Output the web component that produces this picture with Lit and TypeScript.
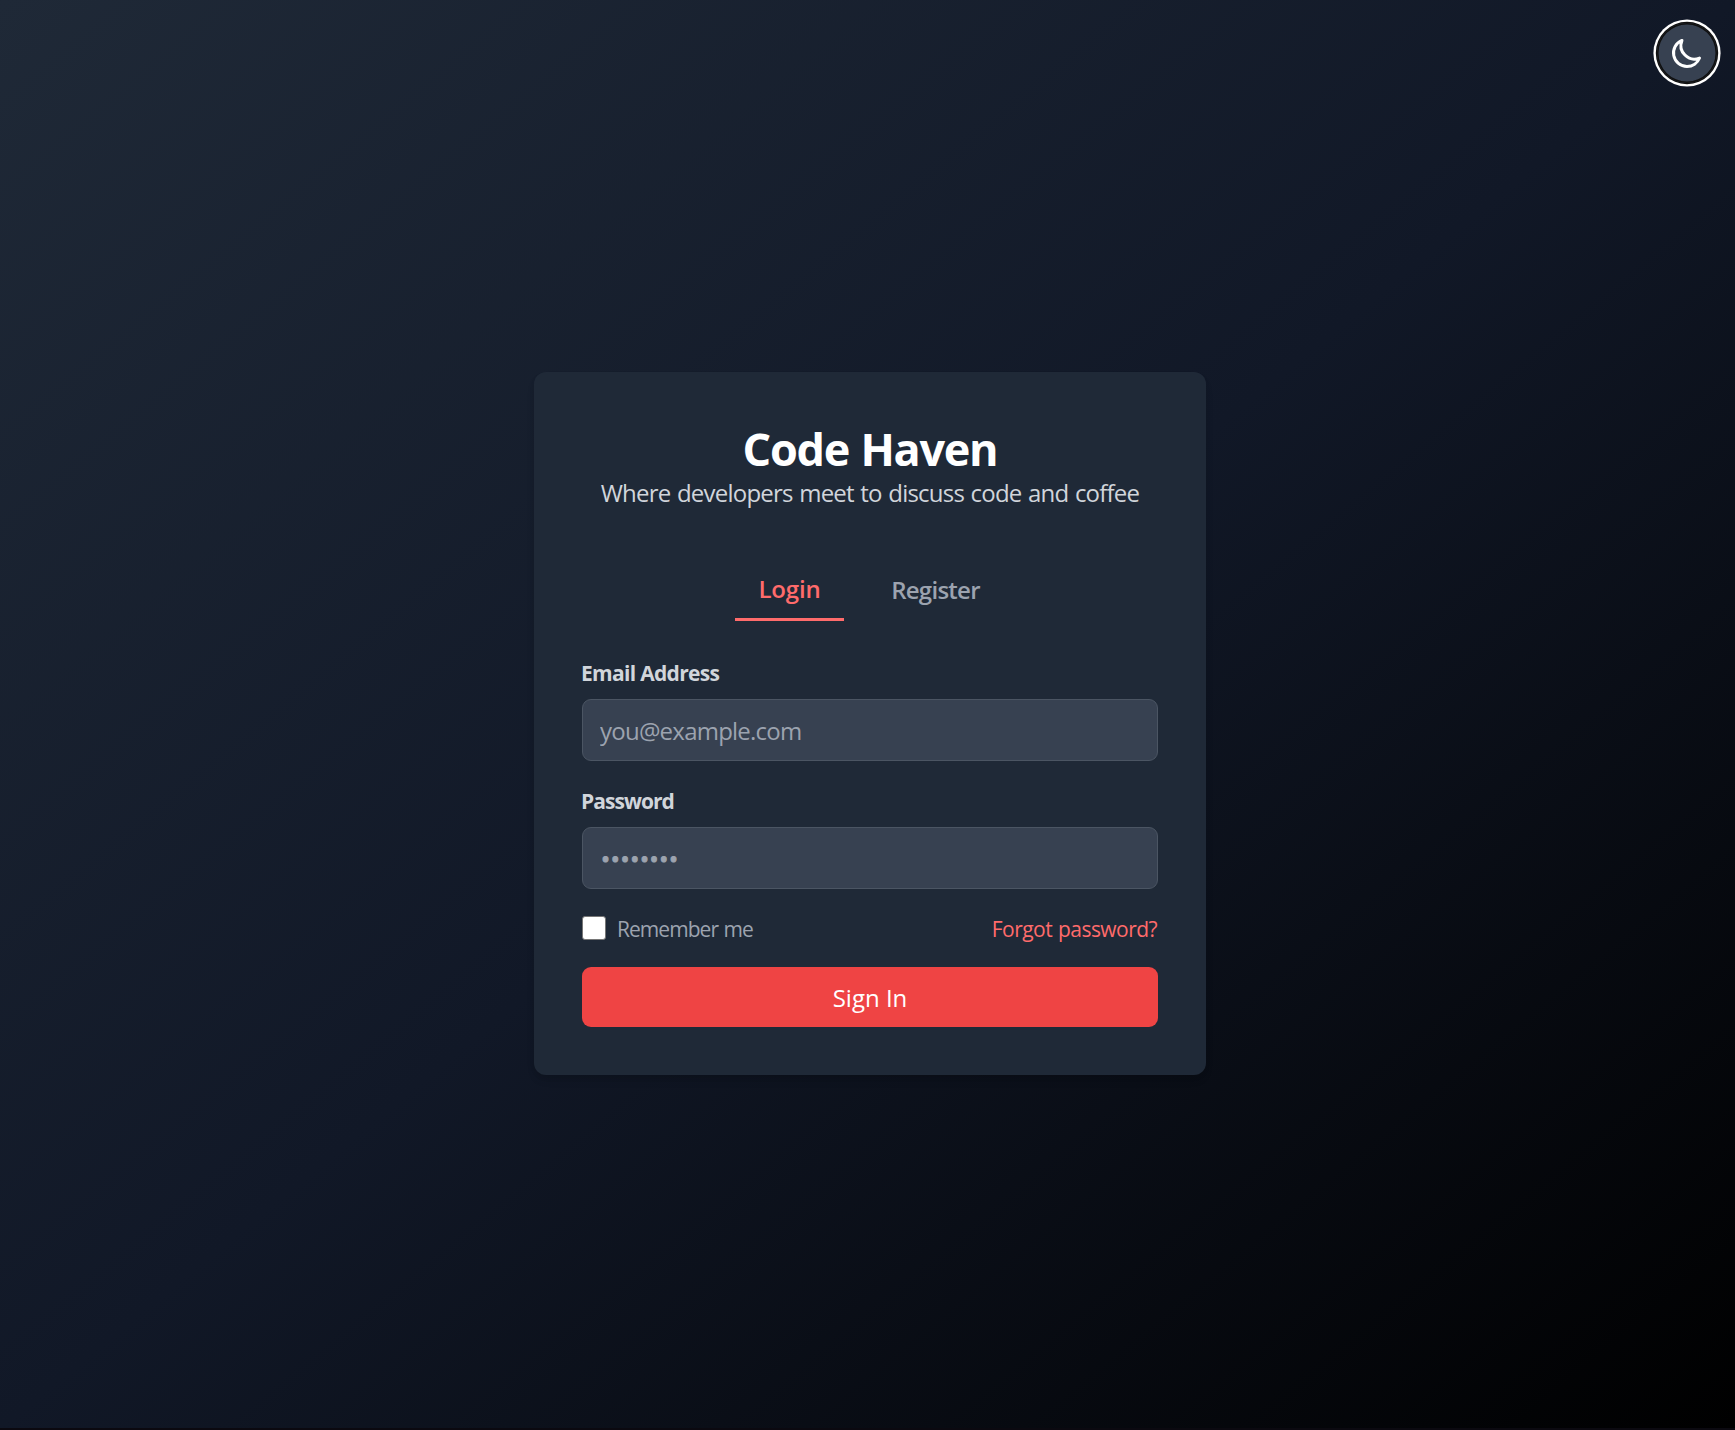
import { LitElement, html, css } from "lit";
import { customElement, state } from "lit/decorators.js";
import { classMap } from "lit/directives/class-map.js";

@customElement("theme-toggle")
class ThemeToggle extends LitElement {
  static styles = css`
    :host {
      display: block;
    }
    .toggle {
      box-sizing: border-box;
      display: flex;
      align-items: center;
      justify-content: center;
      width: 60px;
      height: 60px;
      padding: 0;
      border: 0;
      border-radius: 50%;
      background: #374151;
      color: #fff;
      outline: none;
      box-shadow: 0 0 0 1.2px #101010, 0 0 0 3.6px #fff, inset 0 0 0 1.5px #101010;
      cursor: pointer;
    }
    .icon {
      display: block;
      width: 36px;
      height: 36px;
    }
  `;

  render() {
    return html`
      <button class="toggle" type="button">
        <svg class="icon" viewBox="0 0 24 24" fill="none" stroke="currentColor" stroke-width="2" stroke-linecap="round" stroke-linejoin="round">
          <path d="M20.354 15.354A9 9 0 018.646 3.646 9.003 9.003 0 0012 21a9.003 9.003 0 008.354-5.646z"></path>
        </svg>
      </button>
    `;
  }
}

@customElement("app-root")
class AppRoot extends LitElement {
  @state() private tab = "login";

  static styles = css`
    :host {
      display: block;
      font-family: "Open Sans", "Noto Sans", sans-serif;
      font-size: 24px;
      line-height: 36px;
      color: #fff;
    }
    .page {
      position: relative;
      box-sizing: border-box;
      display: flex;
      align-items: flex-start;
      justify-content: center;
      height: 1430px;
      padding: 372px 0 0 5px;
      border-bottom: 2px solid #0b0910;
      background: linear-gradient(to bottom right, #1f2937, #111827, #000);
      background-clip: padding-box;
      overflow: hidden;
    }
    .theme {
      position: absolute;
      top: 23px;
      right: 18px;
    }
    .card {
      box-sizing: border-box;
      width: 672px;
      height: 703px;
      padding: 48px;
      border-radius: 12px;
      background: #1f2937;
      box-shadow: 0 6px 9px -1px rgba(0, 0, 0, 0.1), 0 3px 6px -2px rgba(0, 0, 0, 0.1);
    }
    .title {
      margin: 0;
      padding-top: 1px;
      font-size: 45px;
      font-weight: 700;
      line-height: 56px;
      letter-spacing: -1.29px;
      word-spacing: 1px;
      text-align: center;
    }
    .subtitle {
      margin: -1px 0 0;
      line-height: 34px;
      letter-spacing: -0.773px;
      word-spacing: 1px;
      text-align: center;
      white-space: nowrap;
      color: #d1d5db;
    }
    .tabs {
      display: flex;
      justify-content: center;
      gap: 24px;
      height: 63px;
      margin-top: 48px;
    }
    .tab {
      box-sizing: border-box;
      display: flex;
      align-items: center;
      justify-content: center;
      padding: 0;
      border: 0;
      background: none;
      font: inherit;
      font-weight: 600;
      color: #9ca3af;
      cursor: pointer;
    }
    .tab-login {
      width: 109px;
      padding-top: 1px;
      letter-spacing: -0.171px;
    }
    .tab-register {
      width: 137px;
      padding-right: 2px;
      letter-spacing: -0.736px;
    }
    .active {
      border-bottom: 3px solid #ff6b6b;
      color: #ff6b6b;
    }
    .form {
      display: flex;
      flex-direction: column;
      margin-top: 37px;
    }
    .field {
      display: flex;
      flex-direction: column;
      gap: 11px;
      margin-bottom: 25px;
    }
    .label {
      margin-left: -1px;
      font-size: 21px;
      font-weight: 700;
      line-height: 30px;
      color: #d1d5db;
    }
    .label-email {
      letter-spacing: -0.691px;
    }
    .label-password {
      letter-spacing: -0.966px;
    }
    .input {
      box-sizing: border-box;
      width: 100%;
      height: 62px;
      padding: 12px 17px;
      border: 1px solid #4b5563;
      border-radius: 9px;
      background: #374151;
      font: inherit;
      color: #fff;
      outline: none;
    }
    .input::placeholder {
      color: #9ca3af;
      opacity: 1;
    }
    .input-email {
      letter-spacing: -0.768px;
    }
    .input-password {
      padding-left: 18px;
      letter-spacing: 0.7px;
      -webkit-text-stroke: 1px #9ca3af;
    }
    .options {
      display: flex;
      align-items: flex-start;
      justify-content: space-between;
      height: 30px;
      margin-bottom: 23px;
      font-size: 21px;
      line-height: 30px;
    }
    .remember {
      display: flex;
      align-items: flex-start;
      gap: 11px;
      letter-spacing: -0.955px;
      word-spacing: 1px;
      color: #9ca3af;
    }
    .check {
      appearance: none;
      box-sizing: border-box;
      width: 24px;
      height: 24px;
      margin: 2px 0 0;
      border: 1px solid #767676;
      border-radius: 3px;
      background: #fff;
    }
    .forgot {
      margin-right: 1px;
      letter-spacing: -0.55px;
      word-spacing: 1px;
      color: #ff6b6b;
      text-decoration: none;
    }
    .submit {
      height: 60px;
      padding: 1px 0 0;
      border: 0;
      border-radius: 9px;
      background: #ef4444;
      font: inherit;
      color: #fff;
      cursor: pointer;
    }
  `;

  private renderTab(id: string, label: string) {
    const classes = { tab: true, [`tab-${id}`]: true, active: this.tab === id };
    return html`<button class=${classMap(classes)} type="button" @click=${() => (this.tab = id)}>${label}</button>`;
  }

  render() {
    return html`
      <main class="page">
        <theme-toggle class="theme"></theme-toggle>
        <section class="card">
          <h1 class="title">Code Haven</h1>
          <p class="subtitle">Where developers meet to discuss code and coffee</p>
          <nav class="tabs">${this.renderTab("login", "Login")}${this.renderTab("register", "Register")}</nav>
          <form class="form" @submit=${(e: Event) => e.preventDefault()}>
            <div class="field">
              <label class="label label-email" for="email">Email Address</label>
              <input class="input input-email" id="email" type="email" placeholder="you@example.com" />
            </div>
            <div class="field">
              <label class="label label-password" for="password">Password</label>
              <input class="input input-password" id="password" type="password" placeholder="••••••••" />
            </div>
            <div class="options">
              <label class="remember"><input class="check" type="checkbox" />Remember me</label>
              <a class="forgot" href="#">Forgot password?</a>
            </div>
            <button class="submit" type="submit">Sign In</button>
          </form>
        </section>
      </main>
    `;
  }
}
